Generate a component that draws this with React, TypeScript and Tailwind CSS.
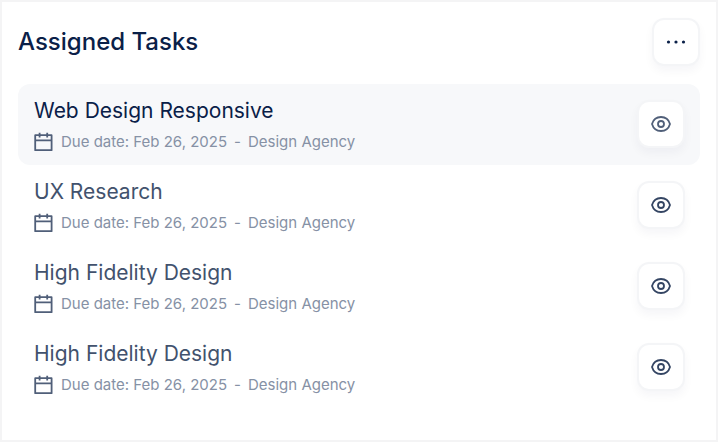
import React from 'react'

interface Task {
  id: number
  title: string
  due: string
  client: string
  active?: boolean
}

const tasks: Task[] = [
  { id: 1, title: 'Web Design Responsive', due: 'Feb 26, 2025', client: 'Design Agency', active: true },
  { id: 2, title: 'UX Research', due: 'Feb 26, 2025', client: 'Design Agency' },
  { id: 3, title: 'High Fidelity Design', due: 'Feb 26, 2025', client: 'Design Agency' },
  { id: 4, title: 'High Fidelity Design', due: 'Feb 26, 2025', client: 'Design Agency' },
]

function CalendarIcon() {
  return (
    <svg width="19" height="20" viewBox="0 0 19 20" fill="none" stroke="currentColor" strokeWidth="1.8" aria-hidden="true">
      <path d="M1.2 3.2h16.4v15H1.2z" strokeLinejoin="round" />
      <path d="M1.2 8.4h16.4M5.6 0.8v4.8M13.2 0.8v4.8" />
    </svg>
  )
}

function EyeIcon() {
  return (
    <svg width="20" height="16" viewBox="0 0 20 16" fill="none" stroke="currentColor" strokeWidth="1.8" aria-hidden="true">
      <path d="M1 8C2.3 3.6 5.8 1 10 1S17.7 3.6 19 8C17.7 12.4 14.2 15 10 15S2.3 12.4 1 8Z" strokeLinejoin="round" />
      <circle cx="10" cy="8" r="3" />
    </svg>
  )
}

function DotsIcon() {
  return (
    <svg width="20" height="4" viewBox="0 0 20 4" fill="currentColor" aria-hidden="true">
      <circle cx="2.5" cy="2" r="1.6" />
      <circle cx="10" cy="2" r="1.6" />
      <circle cx="17.5" cy="2" r="1.6" />
    </svg>
  )
}

function TaskRow({ task }: { task: Task }) {
  return (
    <li className={`flex items-center justify-between rounded-xl pt-3 pb-[13px] pl-4 pr-[15px] ${task.active ? 'bg-[#f7f8fa]' : ''}`}>
      <div>
        <h3 className={`text-[21px] leading-[30px] ${task.active ? 'text-[#0a2048]' : 'text-[#42526d]'}`}>{task.title}</h3>
        <div className="mt-[5px] flex items-center gap-2 text-[#505f79]">
          <CalendarIcon />
          <p className="flex gap-[7px] text-[15px] leading-[21px] text-[#8691a5]">
            <span>Due date: {task.due}</span>
            <span>-</span>
            <span>{task.client}</span>
          </p>
        </div>
      </div>
      <button
        aria-label={`View ${task.title}`}
        className={`flex size-12 items-center justify-center rounded-xl border-2 border-[#f4f5f7] bg-white shadow-[0_5px_10px_rgba(10,32,72,0.04)] ${task.active ? 'text-[#505f79]' : 'text-[#344563]'}`}
      >
        <EyeIcon />
      </button>
    </li>
  )
}

function App(): React.JSX.Element {
  return (
    <section className="border-2 border-[#f4f4f5] bg-white px-4 pb-8 pt-4 font-['Inter',sans-serif]">
      <header className="flex items-center justify-between">
        <h2 className="text-2xl font-medium text-[#0a2048]">Assigned Tasks</h2>
        <button
          aria-label="More options"
          className="flex size-12 items-center justify-center rounded-xl border-2 border-[#f4f5f7] bg-white text-[#0a2048] shadow-[0_5px_10px_rgba(10,32,72,0.04)]"
        >
          <DotsIcon />
        </button>
      </header>

      <ul className="mt-[18px]">
        {tasks.map((task) => (
          <TaskRow key={task.id} task={task} />
        ))}
      </ul>
    </section>
  )
}

export default App
